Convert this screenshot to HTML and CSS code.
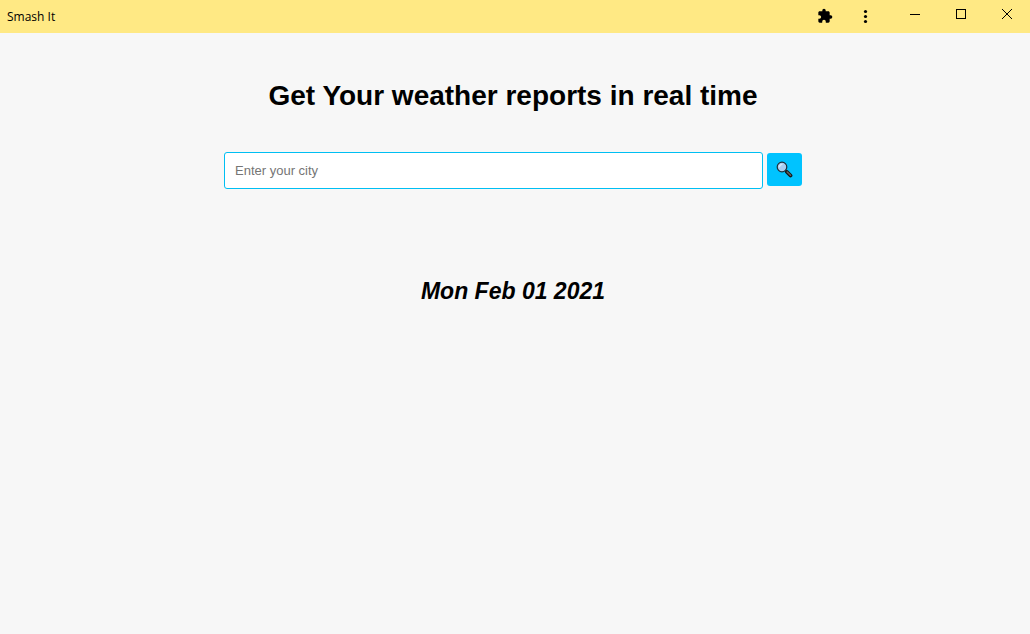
FILE: index.html
```html
<!DOCTYPE html>
<html lang="en">
<head>
<meta charset="utf-8">
<meta name="viewport" content="width=device-width, initial-scale=1">
<title>Smash It</title>
<link rel="stylesheet" href="styles.css">
</head>
<body>
<header class="titlebar">
  <span class="app-name">Smash It</span>
  <div class="app-actions">
    <button class="icon-button" type="button" aria-label="Extensions">
      <svg width="16" height="16" viewBox="0 0 24 24"><path d="M20.500 11H19V7c0-1.100-.9-2-2-2h-4V3.500a2.500 2.500 0 0 0-5 0V5H4c-1.100 0-2 .9-2 2v3.800h1.500a2.700 2.700 0 0 1 0 5.400H2V20c0 1.100.9 2 2 2h3.800v-1.500a2.700 2.700 0 0 1 5.400 0V22H17c1.100 0 2-.9 2-2v-4h1.500a2.500 2.500 0 0 0 0-5z"/></svg>
    </button>
    <button class="icon-button" type="button" aria-label="Menu">
      <svg width="18" height="18" viewBox="0 0 18 18"><circle cx="8.500" cy="4.500" r="1.600"/><circle cx="8.500" cy="9.500" r="1.600"/><circle cx="8.500" cy="14.500" r="1.600"/></svg>
    </button>
  </div>
  <div class="window-controls">
    <button class="window-button" type="button" aria-label="Minimize">
      <svg width="12" height="12" viewBox="0 0 12 12"><path class="line" d="M1 6.500h10" shape-rendering="crispEdges"/></svg>
    </button>
    <button class="window-button" type="button" aria-label="Maximize">
      <svg width="12" height="12" viewBox="0 0 12 12"><path class="line" d="M1.500 1.500h9v9h-9z" shape-rendering="crispEdges"/></svg>
    </button>
    <button class="window-button" type="button" aria-label="Close">
      <svg width="12" height="12" viewBox="0 0 12 12"><path class="line" d="M1 1l10 10M11 1L1 11"/></svg>
    </button>
  </div>
</header>
<main class="page">
  <h1 class="heading">Get Your weather reports in real time</h1>
  <form class="search">
    <input class="city" type="text" placeholder="Enter your city" aria-label="Enter your city">
    <button class="submit" type="button" aria-label="Search">
      <svg width="17" height="17" viewBox="0 0 17 17">
        <path d="M9.500 9.500l1.500 1.500" fill="none" stroke="#151515" stroke-width="2"/>
        <path d="M11 11l3.500 3.500" fill="none" stroke="#151515" stroke-width="3.800" stroke-linecap="round"/>
        <path d="M11.200 11l3.300 3.200" fill="none" stroke="#65605e" stroke-width="1.600" stroke-linecap="round"/>
        <circle cx="6" cy="6" r="4.800" fill="#a9cdf0" stroke="#1f2d38" stroke-width="1.200"/>
        <path d="M3.400 6.200a2.800 2.800 0 0 1 3-2.800" fill="none" stroke="#d8eafc" stroke-width="1.400"/>
      </svg>
    </button>
  </form>
  <h2 class="date">Mon Feb 01 2021</h2>
</main>
</body>
</html>
```
FILE: styles.css
```css
* {
  box-sizing: border-box;
}

body {
  margin: 0;
  min-height: 100vh;
  background: #f7f7f7;
  color: #000;
  font-family: "Franklin Gothic Medium", "Liberation Sans", Arial, sans-serif;
}

button {
  padding: 0;
  border: 0;
  background: none;
}

svg {
  display: block;
}

.titlebar {
  display: flex;
  height: 33px;
  padding-left: 7px;
  background: #ffe984;
}

.app-name {
  flex: 1;
  font: 12px/33px "Segoe UI", "Open Sans", sans-serif;
}

.app-actions {
  display: flex;
  margin-right: 6px;
}

.icon-button {
  display: grid;
  place-items: center;
  width: 41px;
  height: 31px;
}

.window-controls {
  display: flex;
}

.window-button {
  display: grid;
  place-items: center;
  width: 46px;
  height: 28px;
}

.line {
  fill: none;
  stroke: #000;
  stroke-width: 1px;
}

.page {
  display: flex;
  flex-direction: column;
  align-items: center;
  padding: 45px 4px 0 0;
}

.heading {
  margin: 0;
  font-size: 28px;
  line-height: 36px;
  text-align: center;
}

.search {
  display: flex;
  align-items: center;
  gap: 4px;
  width: 100%;
  max-width: 578px;
  margin: 38px 0 88px;
}

.city {
  flex: 1;
  min-width: 0;
  height: 37px;
  padding: 0 10px;
  border: 1px solid #00bff3;
  border-radius: 3px;
  background: #fff;
  font: 13px "Liberation Sans", Arial, sans-serif;
}

.city::placeholder {
  color: #757575;
}

.submit {
  display: grid;
  place-items: center;
  width: 35px;
  height: 33px;
  margin-bottom: 2px;
  border-radius: 3px;
  background: #00c3ff;
}

.date {
  margin: 0;
  font-size: 23px;
  font-style: italic;
  line-height: 28px;
  text-align: center;
}
```
